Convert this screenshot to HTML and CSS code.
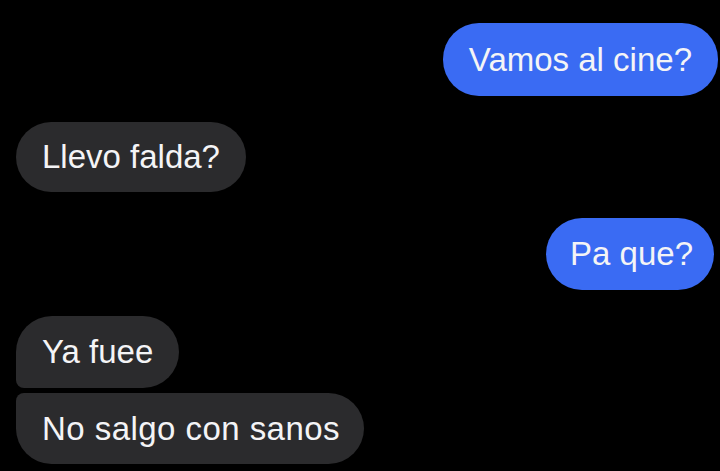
FILE: index.html
```html
<!DOCTYPE html>
<html lang="es">
<head>
<meta charset="utf-8">
<title>Chat</title>
<link rel="stylesheet" href="styles.css">
</head>
<body>
<main class="chat">
  <div class="row row-out"><div class="bubble out">Vamos al cine?</div></div>
  <div class="row row-in"><div class="bubble in">Llevo falda?</div></div>
  <div class="row row-out"><div class="bubble out short">Pa que?</div></div>
  <div class="group">
    <div class="row row-in"><div class="bubble in first">Ya fuee</div></div>
    <div class="row row-in"><div class="bubble in last">No salgo con sanos</div></div>
  </div>
</main>
</body>
</html>
```

FILE: styles.css
```css
html, body {
  margin: 0;
  padding: 0;
  background: #000;
}
body {
  width: 720px;
  height: 471px;
  overflow: hidden;
  font-family: "Liberation Sans", Arial, sans-serif;
}
.chat {
  display: flex;
  flex-direction: column;
  gap: 26px;
  padding: 23px 2px 0 16px;
}
.row {
  display: flex;
}
.row-out {
  justify-content: flex-end;
}
.row-in {
  justify-content: flex-start;
}
.group {
  display: flex;
  flex-direction: column;
  gap: 5px;
}
.bubble {
  font-size: 33px;
  line-height: 40px;
  padding: 16px 26px;
  border-radius: 36px;
  color: #f4f4f6;
  white-space: nowrap;
}
.out {
  background: #3a6bf3;
  padding-top: 17px;
  padding-bottom: 16px;
}
.short {
  padding-left: 24px;
  padding-right: 21px;
  margin-right: 4px;
  padding-top: 16px;
}
.in {
  background: #2b2b2d;
  padding-top: 15px;
  padding-bottom: 15px;
}
.first {
  border-bottom-left-radius: 8px;
  padding-top: 16px;
  padding-bottom: 16px;
}
.last {
  border-top-left-radius: 8px;
  padding-top: 16px;
  padding-bottom: 15px;
  padding-right: 24px;
  letter-spacing: 0.45px;
}
```
